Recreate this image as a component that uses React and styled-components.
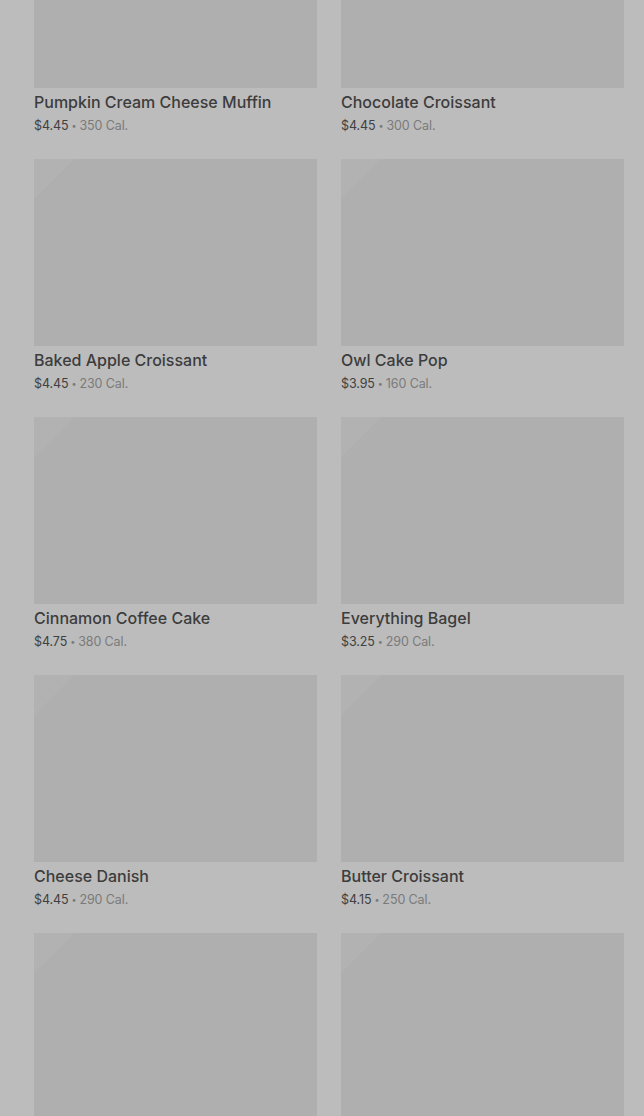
import React from "react";
import styled, { createGlobalStyle } from "styled-components";

const GlobalStyle = createGlobalStyle`
  html, body {
    margin: 0;
    padding: 0;
    background: #bcbcbc;
  }
  body {
    font-family: Inter, "Noto Sans", Roboto, sans-serif;
    -webkit-font-smoothing: antialiased;
  }
`;

const Viewport = styled.div`
  height: 1116px;
  overflow: hidden;
  background: #bcbcbc;
`;

const Grid = styled.div`
  display: grid;
  grid-template-columns: 283px 283px;
  column-gap: 24px;
  row-gap: 24px;
  padding: 0 20px 0 34px;
  margin-top: -99px;
`;

const Card = styled.div`
  display: flex;
  flex-direction: column;
`;

const Thumb = styled.div`
  height: 187px;
  background:
    linear-gradient(135deg, rgba(255, 255, 255, 0.035) 0, rgba(255, 255, 255, 0.035) 28px, rgba(255, 255, 255, 0) 29px),
    #afafaf;
`;

const Name = styled.div`
  margin-top: 4px;
  font-size: 16px;
  line-height: 20px;
  font-weight: 500;
  color: #3c3c3c;
`;

const Meta = styled.div`
  margin-top: 4px;
  font-size: 12.5px;
  line-height: 19px;
  color: #7a7a7a;
  letter-spacing: -0.1px;
`;

const Price = styled.span`
  color: #404040;
`;

const Dot = styled.span`
  font-size: 9px;
  vertical-align: 1px;
  margin: 0 3px;
`;

const items = [
  { name: "Pumpkin Cream Cheese Muffin", price: "$4.45", cal: 350 },
  { name: "Chocolate Croissant", price: "$4.45", cal: 300 },
  { name: "Baked Apple Croissant", price: "$4.45", cal: 230 },
  { name: "Owl Cake Pop", price: "$3.95", cal: 160 },
  { name: "Cinnamon Coffee Cake", price: "$4.75", cal: 380 },
  { name: "Everything Bagel", price: "$3.25", cal: 290 },
  { name: "Cheese Danish", price: "$4.45", cal: 290 },
  { name: "Butter Croissant", price: "$4.15", cal: 250 },
  { id: "more-1" },
  { id: "more-2" },
];

export default function App() {
  return (
    <>
      <GlobalStyle />
      <Viewport>
        <Grid>
          {items.map((it) => (
            <Card key={it.name || it.id}>
              <Thumb />
              {it.name && (
                <>
                  <Name>{it.name}</Name>
                  <Meta>
                    <Price>{it.price}</Price>
                    <Dot>•</Dot>
                    {it.cal} Cal.
                  </Meta>
                </>
              )}
            </Card>
          ))}
        </Grid>
      </Viewport>
    </>
  );
}
